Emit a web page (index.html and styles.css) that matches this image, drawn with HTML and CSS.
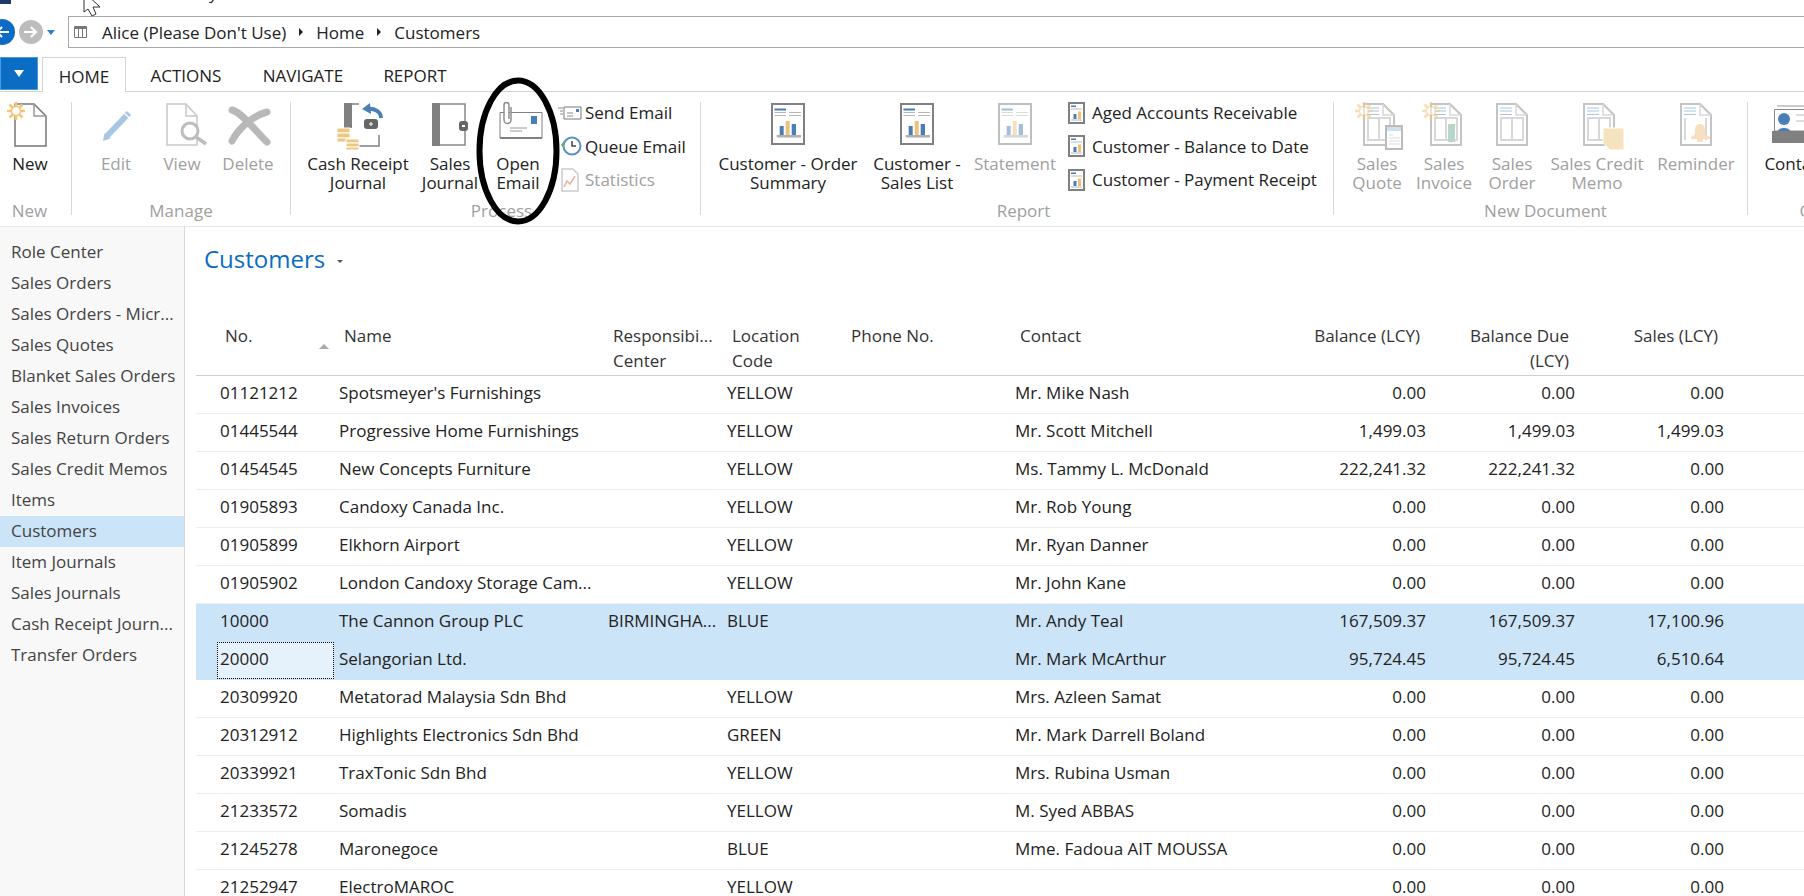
FILE: index.html
```html
<!DOCTYPE html>
<html lang="en">
	<head>
		<meta charset="UTF-8" />
		<title>Customers</title>
		<link rel="stylesheet" href="styles.css">
	</head>
	<body>
		<svg class="defs" width="0" height="0">
			<defs>
				<symbol id="sun" viewBox="0 0 18 18">
					<path d="M9 0v18M0 9h18M2.500 2.500l13 13M15.500 2.500l-13 13" stroke="#f4c67a" stroke-width="2.600"/>
					<circle cx="9" cy="9" r="4.500" fill="#fff" stroke="#f4c67a" stroke-width="1.500"/>
				</symbol>
				<symbol id="report" viewBox="0 0 34 42">
					<rect x="1" y="1" width="32" height="40" fill="#fff" stroke="#808080" stroke-width="2"/>
					<rect x="3.500" y="5.500" width="11.500" height="2" fill="#4a7fb5"/>
					<path d="M3.500 9.500H15M3.500 12.500H15M18 9.500h12M18 12.500h12" stroke="#b8b8b8"/>
					<rect x="8.700" y="23" width="4" height="9" fill="#4a7fb5"/>
					<rect x="14.700" y="18" width="4" height="14" fill="#ecc27a"/>
					<rect x="20.700" y="21" width="4.300" height="11" fill="#4a7fb5"/>
					<rect x="5.700" y="32" width="24.300" height="2.500" fill="#b0b0b0"/>
				</symbol>
				<symbol id="report-small" viewBox="0 0 17 22">
					<rect x="1" y="1" width="15" height="20" fill="#fff" stroke="#808080" stroke-width="2"/>
					<rect x="3" y="3.500" width="5" height="1.500" fill="#4a7fb5"/>
					<path d="M3 7h11" stroke="#b8b8b8"/>
					<rect x="5.500" y="12" width="3" height="5" fill="#4a7fb5"/>
					<rect x="10" y="9.500" width="3" height="7.500" fill="#ecc27a"/>
					<path d="M3 18h11" stroke="#b8b8b8"/>
				</symbol>
				<symbol id="doc" viewBox="0 0 32 43">
					<path d="M1 1h19l11 11v30H1z" fill="#fff" stroke="#c4c4c4" stroke-width="2"/>
					<path d="M20 1v11h11" fill="none" stroke="#d8d8d8" stroke-width="1.500"/>
					<path d="M4 5h12M4 8h12M4 11.500h12" stroke="#a9c3e0"/>
					<path d="M5 15h22v22H5zM16 15v22" fill="none" stroke="#d8d8d8" stroke-width="2"/>
				</symbol>
			</defs>
		</svg>

		<header class="title-bar">
			<span class="app-mark"></span>
			<span class="title-cut">y</span>
		</header>

		<nav class="nav-bar">
			<div class="nav-buttons">
				<span class="nav-round nav-back">
					<svg width="14" height="12" viewBox="0 0 14 12"><path d="M7 1L2 6l5 5M2 6h12" fill="none" stroke="#fff" stroke-width="2.200"/></svg>
				</span>
				<span class="nav-round nav-forward">
					<svg width="14" height="12" viewBox="0 0 14 12"><path d="M7 1l5 5-5 5M12 6H0" fill="none" stroke="#fff" stroke-width="2.200"/></svg>
				</span>
				<span class="nav-drop"></span>
			</div>
			<div class="address">
				<svg class="address-icon" width="13" height="12" viewBox="0 0 13 12"><path d="M.5.5h12v11H.5z" fill="none" stroke="#777"/><path d="M0 2h13" stroke="#777" stroke-width="2"/><path d="M4.500 3v8M8.500 3v8" stroke="#777"/></svg>
				<span>Alice (Please Don't Use)</span>
				<span class="crumb-arrow"></span>
				<span>Home</span>
				<span class="crumb-arrow"></span>
				<span>Customers</span>
			</div>
		</nav>

		<div class="tabs">
			<span class="app-button"><span class="app-caret"></span></span>
			<span class="tab tab-active">HOME</span>
			<span class="tab tab-actions">ACTIONS</span>
			<span class="tab tab-navigate">NAVIGATE</span>
			<span class="tab tab-report">REPORT</span>
		</div>

		<section class="ribbon">
			<div class="group group-new">
				<div class="group-row">
					<div class="big w60">
						<span class="big-icon">
							<svg width="46" height="44" viewBox="0 0 46 44">
								<path d="M8 1h19l12 12v30H8z" fill="#fff" stroke="#777" stroke-width="1.500"/>
								<path d="M27 1v12h12" fill="none" stroke="#999" stroke-width="1.500"/>
								<use href="#sun" x="0" y="-1" width="18" height="18"/>
							</svg>
						</span>
						<span class="big-text">New</span>
					</div>
				</div>
				<div class="group-label">New</div>
			</div>

			<div class="group group-manage">
				<div class="group-row">
					<div class="big w66 off">
						<span class="big-icon">
							<svg width="36" height="44" viewBox="0 0 36 44">
								<path d="M9 33L31 10" stroke="#a9c6e4" stroke-width="6"/>
								<path d="M5 38l1.500-8 6 5.500z" fill="#a9c6e4"/>
								<path d="M26.500 10.500l5 4.500" stroke="#fff" stroke-width="1.200"/>
							</svg>
						</span>
						<span class="big-text">Edit</span>
					</div>
					<div class="big w66 off">
						<span class="big-icon">
							<svg width="40" height="44" viewBox="0 0 40 44">
								<path d="M5 1h19l11 12v29H5z" fill="#fff" stroke="#c8c8c8" stroke-width="1.500"/>
								<path d="M24 1v12h11" fill="none" stroke="#c8c8c8" stroke-width="1.500"/>
								<circle cx="28" cy="28" r="8" fill="#fff" stroke="#bdbdbd" stroke-width="3"/>
								<path d="M34 34l10 7" stroke="#bdbdbd" stroke-width="3.500"/>
							</svg>
						</span>
						<span class="big-text">View</span>
					</div>
					<div class="big w66 off">
						<span class="big-icon">
							<svg width="44" height="44" viewBox="0 0 44 44">
								<path d="M6 7c11 3 24 22 35 32M41 9C26 13 12 26 6 38" fill="none" stroke="#b8b8b8" stroke-width="7" stroke-linecap="round"/>
							</svg>
						</span>
						<span class="big-text">Delete</span>
					</div>
				</div>
				<div class="group-label">Manage</div>
			</div>

			<div class="group group-process">
				<div class="group-row">
					<div class="big w110">
						<span class="big-icon">
							<svg width="50" height="46" viewBox="0 0 50 46">
								<path d="M19 1h7M46 32v11H19" fill="none" stroke="#808080" stroke-width="1.500"/>
								<rect x="11" y="0" width="8" height="25" fill="#808080"/>
								<rect x="31" y="16" width="14" height="10" rx="3" fill="#666"/>
								<path d="M38 19v4M36 21h4" stroke="#fff"/>
								<path d="M48 15c0-6-6-10-14-9" fill="none" stroke="#4a7fb5" stroke-width="4"/>
								<path d="M29 6l8-6 1 11z" fill="#4a7fb5"/>
								<g fill="#edc77f" stroke="#fff">
									<rect x="4" y="25" width="13" height="5"/>
									<rect x="4" y="30" width="13" height="5"/>
									<rect x="4" y="35" width="13" height="4"/>
									<rect x="13" y="36" width="13" height="4"/>
									<rect x="13" y="40" width="13" height="4"/>
									<rect x="13" y="44" width="13" height="3"/>
								</g>
							</svg>
						</span>
						<span class="big-text">Cash Receipt<br>Journal</span>
					</div>
					<div class="big w74">
						<span class="big-icon">
							<svg width="36" height="44" viewBox="0 0 36 44">
								<path d="M4 1h29v41H4z" fill="#fff" stroke="#888" stroke-width="1.500"/>
								<rect x="0" y="0" width="8" height="43" fill="#808080"/>
								<rect x="27" y="18" width="9" height="10" rx="3" fill="#666"/>
								<path d="M30 23h3" stroke="#fff" stroke-width="2"/>
							</svg>
						</span>
						<span class="big-text">Sales<br>Journal</span>
					</div>
					<div class="big w62">
						<span class="big-icon">
							<svg width="50" height="44" viewBox="0 0 50 44">
								<path d="M7 9.500h42V35H7z" fill="#fff" stroke="#808080"/>
								<path d="M7 35h42" stroke="#808080" stroke-width="2"/>
								<rect x="38" y="13" width="6" height="8" fill="#4a7fb5"/>
								<path d="M17 25h17M17 28h12" stroke="#999"/>
								<path d="M18 4v13a3 3 0 0 1-7 0V2a2.500 2.500 0 0 1 5 0v14" fill="#fff" stroke="#888" stroke-width="1.400"/>
							</svg>
						</span>
						<span class="big-text">Open<br>Email</span>
					</div>
					<div class="small-list">
						<div class="small">
							<svg width="24" height="14" viewBox="0 0 24 14">
								<path d="M6 1h17v12H6z" fill="#fff" stroke="#777"/>
								<rect x="18" y="3" width="3" height="3" fill="#4a7fb5"/>
								<path d="M0 2h5M2 5h3M2 8h3M9 7h6M9 10h6" stroke="#888"/>
							</svg>
							<span>Send Email</span>
						</div>
						<div class="small">
							<svg width="24" height="20" viewBox="0 0 24 20">
								<circle cx="14" cy="10" r="8.500" fill="#fff" stroke="#5a8fc0" stroke-width="2"/>
								<path d="M14 5v5h4" fill="none" stroke="#444" stroke-width="1.500"/>
								<path d="M6 5L3 9l3 4z" fill="#6aa87a"/>
							</svg>
							<span>Queue Email</span>
						</div>
						<div class="small off">
							<svg width="24" height="24" viewBox="0 0 24 24">
								<path d="M4 1h11l5 5v17H4z" fill="#fff" stroke="#ccc" stroke-width="1.500"/>
								<path d="M6 19l3-6 3 3 5-8" fill="none" stroke="#eeb0a0" stroke-width="1.500"/>
							</svg>
							<span>Statistics</span>
						</div>
					</div>
				</div>
				<div class="group-label">Process</div>
			</div>

			<div class="group group-report">
				<div class="group-row">
					<div class="big w148">
						<span class="big-icon"><svg width="34" height="42"><use href="#report"/></svg></span>
						<span class="big-text">Customer - Order<br>Summary</span>
					</div>
					<div class="big w110">
						<span class="big-icon"><svg width="34" height="42"><use href="#report"/></svg></span>
						<span class="big-text">Customer -<br>Sales List</span>
					</div>
					<div class="big w86 off">
						<span class="big-icon faded"><svg width="34" height="42"><use href="#report"/></svg></span>
						<span class="big-text">Statement</span>
					</div>
					<div class="small-list report-list">
						<div class="small"><svg width="17" height="22"><use href="#report-small"/></svg><span>Aged Accounts Receivable</span></div>
						<div class="small"><svg width="17" height="22"><use href="#report-small"/></svg><span>Customer - Balance to Date</span></div>
						<div class="small"><svg width="17" height="22"><use href="#report-small"/></svg><span>Customer - Payment Receipt</span></div>
					</div>
				</div>
				<div class="group-label">Report</div>
			</div>

			<div class="group group-doc">
				<div class="group-row">
					<div class="big w66 off">
						<span class="big-icon">
							<svg width="52" height="46" viewBox="0 0 52 46">
								<svg x="12" y="0" width="32" height="43"><use href="#doc"/></svg>
								<use href="#sun" x="4" y="-1" width="18" height="18" opacity=".55"/>
								<path d="M35 23h16v23H35z" fill="#fff" stroke="#bbb" stroke-width="2"/>
								<rect x="36" y="24" width="14" height="4" fill="#cfe0f0"/>
								<path d="M38 32h4M38 35h11M38 38h11M38 41h11" stroke="#ddd"/>
							</svg>
						</span>
						<span class="big-text">Sales<br>Quote</span>
					</div>
					<div class="big w68 off">
						<span class="big-icon">
							<svg width="44" height="46" viewBox="0 0 44 46">
								<svg x="8" y="0" width="32" height="43"><use href="#doc"/></svg>
								<use href="#sun" x="0" y="-1" width="18" height="18" opacity=".55"/>
								<rect x="26" y="21" width="7" height="18" fill="#b5d6c8"/>
							</svg>
						</span>
						<span class="big-text">Sales<br>Invoice</span>
					</div>
					<div class="big w68 off">
						<span class="big-icon"><svg width="32" height="43"><use href="#doc"/></svg></span>
						<span class="big-text">Sales<br>Order</span>
					</div>
					<div class="big w102 off">
						<span class="big-icon">
							<svg width="56" height="46" viewBox="0 0 56 46">
								<svg x="14" y="0" width="32" height="43"><use href="#doc"/></svg>
								<path d="M34 25h21v22H41l-7-7z" fill="#f5e3bd" stroke="#fff"/>
							</svg>
						</span>
						<span class="big-text">Sales Credit<br>Memo</span>
					</div>
					<div class="big w96 off">
						<span class="big-icon">
							<svg width="32" height="43" viewBox="0 0 32 43">
								<path d="M1 1h19l11 11v30H1z" fill="#fff" stroke="#c4c4c4" stroke-width="2"/>
								<path d="M20 1v11h11" fill="none" stroke="#d8d8d8" stroke-width="1.500"/>
								<path d="M4 5h12M4 8h12M4 11.500h12" stroke="#a9c3e0"/>
								<path d="M5 15v22M26 15v22" stroke="#d8d8d8" stroke-width="2"/>
								<path d="M20 21c4 0 5 3 5 7s1 4 5 6v2H11v-2c4-2 4-2 4-6s1-7 5-7zM17 36h6v3h-6z" fill="#f7dfc0"/>
							</svg>
						</span>
						<span class="big-text">Reminder</span>
					</div>
				</div>
				<div class="group-label">New Document</div>
			</div>

			<div class="group group-last">
				<div class="group-row">
					<div class="big w100">
						<span class="big-icon">
							<svg width="54" height="42" viewBox="0 0 54 42">
								<path d="M5 3h42" stroke="#999"/>
								<path d="M2.500 6.500h46V28h-46z" fill="#fff" stroke="#888"/>
								<circle cx="12" cy="16" r="6" fill="#4a7fb5"/>
								<path d="M6 28c0-4 12-4 12 0z" fill="#4a7fb5"/>
								<path d="M24 12h18M24 18h18" stroke="#bbb"/>
								<rect x="0" y="28" width="54" height="12" fill="#808080"/>
							</svg>
						</span>
						<span class="big-text">Contacts</span>
					</div>
				</div>
				<div class="group-label">Customer</div>
			</div>
		</section>

		<div class="body">
			<aside class="side">
				<a>Role Center</a>
				<a>Sales Orders</a>
				<a>Sales Orders - Micr...</a>
				<a>Sales Quotes</a>
				<a>Blanket Sales Orders</a>
				<a>Sales Invoices</a>
				<a>Sales Return Orders</a>
				<a>Sales Credit Memos</a>
				<a>Items</a>
				<a class="side-active">Customers</a>
				<a>Item Journals</a>
				<a>Sales Journals</a>
				<a>Cash Receipt Journ...</a>
				<a>Transfer Orders</a>
			</aside>
			<main class="main">
				<h1 class="page-title">Customers <span class="title-caret"></span></h1>
				<table class="grid">
					<colgroup>
						<col class="c-no"><col class="c-name"><col class="c-resp"><col class="c-loc"><col class="c-phone"><col class="c-contact"><col class="c-bal"><col class="c-due"><col class="c-sales"><col>
					</colgroup>
					<thead>
						<tr>
							<th class="th-no">No.<span class="sort-arrow"></span></th>
							<th>Name</th>
							<th>Responsibi...<br>Center</th>
							<th>Location<br>Code</th>
							<th>Phone No.</th>
							<th>Contact</th>
							<th class="num">Balance (LCY)</th>
							<th class="num">Balance Due<br>(LCY)</th>
							<th class="num">Sales (LCY)</th>
							<th></th>
						</tr>
					</thead>
					<tbody>
						<tr><td class="td-no">01121212</td><td>Spotsmeyer's Furnishings</td><td></td><td>YELLOW</td><td></td><td>Mr. Mike Nash</td><td class="num">0.00</td><td class="num">0.00</td><td class="num">0.00</td><td></td></tr>
						<tr><td class="td-no">01445544</td><td>Progressive Home Furnishings</td><td></td><td>YELLOW</td><td></td><td>Mr. Scott Mitchell</td><td class="num">1,499.03</td><td class="num">1,499.03</td><td class="num">1,499.03</td><td></td></tr>
						<tr><td class="td-no">01454545</td><td>New Concepts Furniture</td><td></td><td>YELLOW</td><td></td><td>Ms. Tammy L. McDonald</td><td class="num">222,241.32</td><td class="num">222,241.32</td><td class="num">0.00</td><td></td></tr>
						<tr><td class="td-no">01905893</td><td>Candoxy Canada Inc.</td><td></td><td>YELLOW</td><td></td><td>Mr. Rob Young</td><td class="num">0.00</td><td class="num">0.00</td><td class="num">0.00</td><td></td></tr>
						<tr><td class="td-no">01905899</td><td>Elkhorn Airport</td><td></td><td>YELLOW</td><td></td><td>Mr. Ryan Danner</td><td class="num">0.00</td><td class="num">0.00</td><td class="num">0.00</td><td></td></tr>
						<tr><td class="td-no">01905902</td><td>London Candoxy Storage Cam...</td><td></td><td>YELLOW</td><td></td><td>Mr. John Kane</td><td class="num">0.00</td><td class="num">0.00</td><td class="num">0.00</td><td></td></tr>
						<tr class="sel"><td class="td-no">10000</td><td>The Cannon Group PLC</td><td>BIRMINGHA...</td><td>BLUE</td><td></td><td>Mr. Andy Teal</td><td class="num">167,509.37</td><td class="num">167,509.37</td><td class="num">17,100.96</td><td></td></tr>
						<tr class="sel"><td class="td-no"><span class="focus-cell">20000</span></td><td>Selangorian Ltd.</td><td></td><td></td><td></td><td>Mr. Mark McArthur</td><td class="num">95,724.45</td><td class="num">95,724.45</td><td class="num">6,510.64</td><td></td></tr>
						<tr><td class="td-no">20309920</td><td>Metatorad Malaysia Sdn Bhd</td><td></td><td>YELLOW</td><td></td><td>Mrs. Azleen Samat</td><td class="num">0.00</td><td class="num">0.00</td><td class="num">0.00</td><td></td></tr>
						<tr><td class="td-no">20312912</td><td>Highlights Electronics Sdn Bhd</td><td></td><td>GREEN</td><td></td><td>Mr. Mark Darrell Boland</td><td class="num">0.00</td><td class="num">0.00</td><td class="num">0.00</td><td></td></tr>
						<tr><td class="td-no">20339921</td><td>TraxTonic Sdn Bhd</td><td></td><td>YELLOW</td><td></td><td>Mrs. Rubina Usman</td><td class="num">0.00</td><td class="num">0.00</td><td class="num">0.00</td><td></td></tr>
						<tr><td class="td-no">21233572</td><td>Somadis</td><td></td><td>YELLOW</td><td></td><td>M. Syed ABBAS</td><td class="num">0.00</td><td class="num">0.00</td><td class="num">0.00</td><td></td></tr>
						<tr><td class="td-no">21245278</td><td>Maronegoce</td><td></td><td>BLUE</td><td></td><td>Mme. Fadoua AIT MOUSSA</td><td class="num">0.00</td><td class="num">0.00</td><td class="num">0.00</td><td></td></tr>
						<tr><td class="td-no">21252947</td><td>ElectroMAROC</td><td></td><td>YELLOW</td><td></td><td></td><td class="num">0.00</td><td class="num">0.00</td><td class="num">0.00</td><td></td></tr>
					</tbody>
				</table>
			</main>
		</div>

		<!-- the hand drawn circle and the pointer lie over the page -->
		<svg class="circle-mark" width="90" height="152" viewBox="0 0 90 152">
			<ellipse cx="45" cy="76" rx="38.500" ry="70.500" fill="none" stroke="#000" stroke-width="6"/>
		</svg>
		<svg class="pointer" width="18" height="18" viewBox="0 0 18 18">
			<path d="M1-8v20l4-3 4 7 4-2-3-7h7z" fill="#fff" stroke="#333"/>
		</svg>
	</body>
</html>
```

FILE: styles.css
```css
* {
	box-sizing: border-box;
}
html,
body {
	height: 100%;
}
body {
	margin: 0;
	overflow: hidden;
	background: #fff;
	color: #222;
	font-family: "Open Sans", "Noto Sans", sans-serif;
	font-size: 17px;
	position: relative;
}
.defs {
	position: absolute;
}
.title-bar {
	height: 16px;
	position: relative;
	overflow: hidden;
}
.app-mark {
	display: block;
	width: 11px;
	height: 4px;
	background: #1f3a68;
}
/* only the tail of the window title shows above the fold */
.title-cut {
	position: absolute;
	left: 209px;
	top: -17px;
	line-height: 20px;
}

/* back / forward and address */
.nav-bar {
	height: 41px;
	display: flex;
	align-items: flex-start;
}
.nav-buttons {
	width: 79px;
	height: 32px;
	margin-left: -11px;
	flex: none;
	display: flex;
	align-items: center;
}
.nav-round {
	border-radius: 50%;
	display: flex;
	align-items: center;
	justify-content: center;
	flex: none;
}
.nav-back {
	width: 26px;
	height: 26px;
	background: #0b6cc4;
	margin-right: 4px;
}
.nav-forward {
	width: 24px;
	height: 24px;
	background: #bdbdbd;
}
.nav-drop {
	width: 0;
	height: 0;
	margin-left: 4px;
	border-left: 4px solid transparent;
	border-right: 4px solid transparent;
	border-top: 5px solid #2a7fd0;
}
.address {
	flex: 1;
	height: 32px;
	border: 1px solid #a8a8a8;
	border-right: 0;
	display: flex;
	align-items: center;
	gap: 13px;
	padding-left: 5px;
}
.address-icon {
	margin-right: 2px;
}
.crumb-arrow {
	width: 0;
	height: 0;
	border-top: 4px solid transparent;
	border-bottom: 4px solid transparent;
	border-left: 4px solid #222;
}

/* ribbon */
.tabs {
	height: 35px;
	display: flex;
	align-items: stretch;
	border-bottom: 1px solid #d4d4d4;
}
.app-button {
	width: 38px;
	height: 33px;
	margin-right: 4px;
	background: #0b6cc4;
	border: 1px solid #4a9ae0;
	display: flex;
	align-items: center;
	justify-content: center;
}
.app-caret {
	width: 0;
	height: 0;
	border-left: 5px solid transparent;
	border-right: 5px solid transparent;
	border-top: 7px solid #fff;
}
.tab {
	display: flex;
	align-items: center;
	justify-content: center;
	padding-top: 3px;
}
.tab-active {
	width: 84px;
	height: 35px;
	background: #fff;
	border: 1px solid #d4d4d4;
	border-bottom: 0;
}
.tab-actions {
	width: 120px;
}
.tab-navigate {
	width: 114px;
}
.tab-report {
	width: 110px;
}
.ribbon {
	height: 135px;
	display: flex;
	border-bottom: 1px solid #e6e6e6;
}
.group {
	height: 113px;
	margin-top: 10px;
	padding-top: 1px;
	border-right: 1px solid #d8d8d8;
	flex: none;
}
.group-row {
	height: 98px;
	display: flex;
}
.group-label {
	text-align: center;
	color: #a0a0a0;
	line-height: 20px;
}
.group-new {
	width: 72px;
	padding-right: 12px;
}
.group-manage {
	width: 219px;
	padding-left: 11px;
	padding-right: 11px;
}
.group-process {
	width: 410px;
	padding-left: 12px;
}
.group-report {
	width: 633px;
	padding-left: 13px;
}
.group-doc {
	width: 414px;
	padding-left: 10px;
}
.group-last {
	width: 180px;
	border-right: 0;
	padding-left: 1px;
}
.big {
	display: flex;
	flex-direction: column;
	align-items: center;
	flex: none;
}
.big-icon {
	height: 51px;
	display: block;
	line-height: 0;
}
.big-icon svg {
	overflow: visible;
}
.big-text {
	text-align: center;
	line-height: 19px;
	white-space: nowrap;
}
.off {
	color: #a0a0a0;
}
.faded svg {
	opacity: 0.5;
}
.w60 { width: 60px; }
.w62 { width: 62px; }
.w66 { width: 66px; }
.w68 { width: 68px; }
.w74 { width: 74px; }
.w86 { width: 86px; }
.w96 { width: 96px; }
.w100 { width: 100px; }
.w102 { width: 102px; }
.w110 { width: 110px; }
.w148 { width: 148px; }
.small-list {
	margin-left: 9px;
	margin-top: -7px;
}
.small {
	height: 33.500px;
	display: flex;
	align-items: center;
	gap: 3px;
	white-space: nowrap;
}
.small svg {
	flex: none;
}
.report-list {
	margin-left: 10px;
}
.report-list .small {
	gap: 7px;
}

/* page below the ribbon */
.body {
	height: 669px;
	display: flex;
}
.side {
	width: 185px;
	flex: none;
	background: #f8f8f8;
	border-right: 1px solid #d8d8d8;
	padding-top: 10px;
}
.side a {
	display: block;
	height: 31px;
	line-height: 29px;
	padding-left: 11px;
	color: #444;
	white-space: nowrap;
}
.side .side-active {
	background: #cce4f7;
}
.main {
	flex: 1;
	min-width: 0;
	padding-left: 11px;
}
.page-title {
	margin: 0;
	height: 96px;
	padding-top: 14px;
	padding-left: 8px;
	font-weight: 400;
	font-size: 24px;
	line-height: 36px;
	color: #0b6cc4;
}
.title-caret {
	display: inline-block;
	width: 0;
	height: 0;
	vertical-align: middle;
	margin-left: 6px;
	border-left: 3px solid transparent;
	border-right: 3px solid transparent;
	border-top: 3px solid #555;
}
.grid {
	table-layout: fixed;
	width: 1608px;
	border-collapse: collapse;
	border-spacing: 0;
}
.c-no { width: 138px; }
.c-name { width: 269px; }
.c-resp { width: 119px; }
.c-loc { width: 119px; }
.c-phone { width: 169px; }
.c-contact { width: 270px; }
.c-bal { width: 150px; }
.c-due { width: 149px; }
.c-sales { width: 149px; }
.grid th {
	font-weight: 400;
	text-align: left;
	color: #333;
	vertical-align: top;
	line-height: 25px;
	padding: 0 10px 2px;
	border-bottom: 1px solid #d0d0d0;
	white-space: nowrap;
	position: relative;
}
.grid td {
	height: 38px;
	padding: 0 5px 4px;
	border-bottom: 1px solid #eee;
	white-space: nowrap;
}
.grid .num {
	text-align: right;
	padding-right: 4px;
}
.grid th.num {
	padding-right: 10px;
}
.grid .th-no {
	padding-left: 29px;
}
.grid .td-no {
	padding-left: 24px;
	position: relative;
}
.sel td {
	background: #cce4f7;
}
.grid .sel td {
	border-bottom-color: #cce4f7;
}
.focus-cell {
	position: absolute;
	left: 21px;
	top: 0;
	right: 0;
	bottom: 0;
	padding-left: 2px;
	padding-bottom: 4px;
	display: flex;
	align-items: center;
	background: #e5f1fb;
	border: 1px dotted #000;
}
.sort-arrow {
	position: absolute;
	left: 123px;
	top: 21px;
	width: 0;
	height: 0;
	border-left: 5px solid transparent;
	border-right: 5px solid transparent;
	border-bottom: 5px solid #aaa;
}

.circle-mark {
	position: absolute;
	left: 473px;
	top: 75px;
}
.pointer {
	position: absolute;
	left: 83px;
	top: 0;
}
```
